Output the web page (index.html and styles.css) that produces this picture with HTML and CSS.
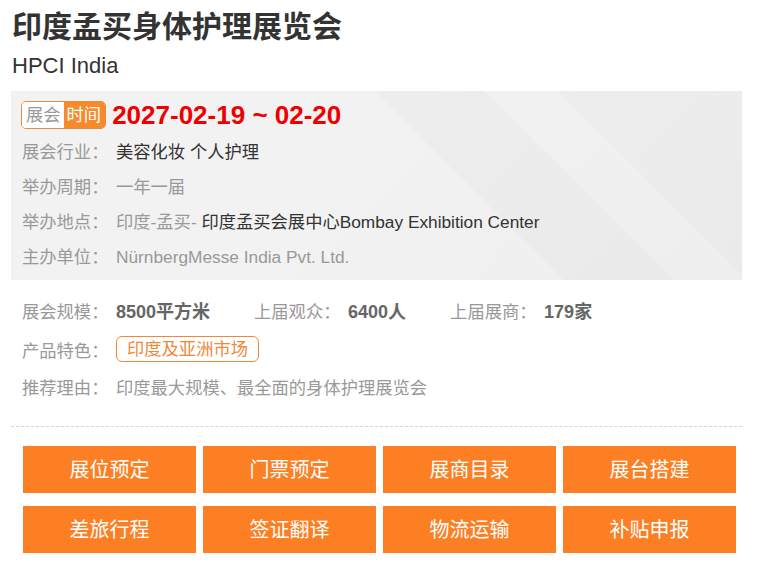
FILE: index.html
```html
<!DOCTYPE html>
<html lang="zh-CN">
<head>
  <meta charset="UTF-8" />
  <meta name="viewport" content="width=device-width, initial-scale=1.0" />
  <title>印度孟买身体护理展览会</title>
  <link rel="stylesheet" href="styles.css">
</head>
<body>
  <div class="expo">
    <h1 class="expo-title">印度孟买身体护理展览会</h1>
    <div class="expo-subtitle">HPCI India</div>

    <div class="expo-box">
      <div class="date-row">
        <span class="date-badge"><span class="badge-left">展会</span><span class="badge-right">时间</span></span>
        <span class="date-text">2027-02-19 ~ 02-20</span>
      </div>
      <div class="info-row">
        <span class="info-label">展会行业：</span>
        <span class="info-value dark">美容化妆 个人护理</span>
      </div>
      <div class="info-row">
        <span class="info-label">举办周期：</span>
        <span class="info-value">一年一届</span>
      </div>
      <div class="info-row">
        <span class="info-label">举办地点：</span>
        <span class="info-value">印度-孟买- <span class="dark">印度孟买会展中心Bombay Exhibition Center</span></span>
      </div>
      <div class="info-row">
        <span class="info-label">主办单位：</span>
        <span class="info-value">NürnbergMesse India Pvt. Ltd.</span>
      </div>
    </div>

    <div class="stats-row">
      <span class="stat"><span class="info-label">展会规模：</span><b>8500平方米</b></span>
      <span class="stat"><span class="info-label">上届观众：</span><b>6400人</b></span>
      <span class="stat"><span class="info-label">上届展商：</span><b>179家</b></span>
    </div>
    <div class="feature-row">
      <span class="info-label">产品特色：</span>
      <span class="feature-tag">印度及亚洲市场</span>
    </div>
    <div class="reason-row">
      <span class="info-label">推荐理由：</span>
      <span class="info-value">印度最大规模、最全面的身体护理展览会</span>
    </div>

    <div class="expo-actions">
      <a class="action-btn" href="#">展位预定</a>
      <a class="action-btn" href="#">门票预定</a>
      <a class="action-btn" href="#">展商目录</a>
      <a class="action-btn" href="#">展台搭建</a>
      <a class="action-btn" href="#">差旅行程</a>
      <a class="action-btn" href="#">签证翻译</a>
      <a class="action-btn" href="#">物流运输</a>
      <a class="action-btn" href="#">补贴申报</a>
    </div>
  </div>
</body>
</html>
```

FILE: styles.css
```css
* {
  box-sizing: border-box;
  margin: 0;
  padding: 0;
}

body {
  background: #fff;
  font-family: 'Liberation Sans', 'Noto Sans CJK SC', sans-serif;
  font-size: 17.3px;
  color: #333;
}

.expo {
  padding: 7px 16px 0 11px;
}

.expo-title {
  font-size: 30px;
  line-height: 40px;
  font-weight: bold;
  color: #333;
  padding-left: 1px;
}

.expo-subtitle {
  font-size: 22px;
  line-height: 32px;
  margin-top: 3px;
  color: #333;
  padding-left: 1px;
}

/* grey panel with soft diagonal shapes */
.expo-box {
  margin-top: 9px;
  height: 189px;
  padding: 10px 10px 0;
  background:
    linear-gradient(225deg, rgba(0,0,0,0.015) 20%, rgba(0,0,0,0) 20%),
    linear-gradient(45deg, rgba(255,255,255,0) 60%, rgba(0,0,0,0.018) 60%, rgba(0,0,0,0.018) 72%, rgba(255,255,255,0) 72%),
    linear-gradient(135deg, #f2f2f2 45%, #eeeeee 100%);
}

.date-row {
  display: flex;
  align-items: center;
  height: 28px;
}

.date-badge {
  display: inline-flex;
  border: 1px solid #f0883a;
  border-radius: 5px;
  overflow: hidden;
  line-height: 26px;
}

.badge-left {
  background: #fff;
  color: #999;
  padding: 0 3px 0 4px;
}

.badge-right {
  background: #f98a2c;
  color: #fff;
  padding: 0 4px 0 3px;
}

.date-text {
  margin-left: 6px;
  color: #ee0000;
  font-size: 26px;
  font-weight: bold;
}

.info-row {
  display: flex;
  line-height: 35px;
  white-space: nowrap;
}

.date-row + .info-row {
  margin-top: 6px;
}

.info-label {
  display: inline-block;
  width: 95px;
  padding-left: 1px;
  color: #999;
}

.info-value {
  color: #999;
}

.dark {
  color: #333;
}

.stats-row {
  display: flex;
  margin-top: 14px;
  padding-left: 10px;
  line-height: 36px;
  white-space: nowrap;
}

.stat {
  margin-right: 43px;
}

.stat b {
  font-size: 18px;
  color: #666;
}

.feature-row {
  padding-left: 10px;
  height: 38px;
  display: flex;
  align-items: center;
}

.feature-tag {
  display: inline-block;
  border: 1px solid #f0883a;
  border-radius: 6px;
  color: #f0883a;
  line-height: 24px;
  padding: 0 10px;
}

.reason-row {
  display: flex;
  padding-left: 10px;
  line-height: 40px;
  border-bottom: 1px dashed #d5d5d5;
  padding-bottom: 18px;
}

.expo-actions {
  display: grid;
  grid-template-columns: repeat(4, 173px);
  grid-auto-rows: 47px;
  gap: 13px 7px;
  padding: 19px 0 0 12px;
}

.action-btn {
  display: flex;
  align-items: center;
  justify-content: center;
  padding-bottom: 3px;
  background: #fd7f23;
  color: #fff;
  font-size: 20px;
  font-family: 'Noto Sans CJK SC', sans-serif;
  text-decoration: none;
}
```
